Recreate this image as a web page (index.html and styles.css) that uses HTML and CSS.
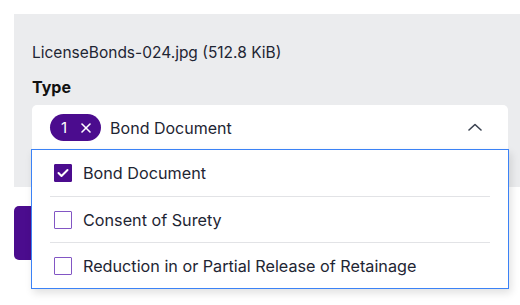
FILE: index.html
```html
<!DOCTYPE html>
<html lang="en">
  <head>
    <meta charset="UTF-8" />
    <meta name="viewport" content="width=device-width, initial-scale=1.0" />
    <title>Attachment Type</title>
    <link rel="stylesheet" href="styles.css">
  </head>
  <body>
    <div class="upload-panel">
      <div class="file-name">LicenseBonds-024.jpg (512.8 KiB)</div>
      <label class="field-label">Type</label>

      <div class="type-select">
        <div class="select-value">
          <span class="count-chip">
            <span>1</span>
            <svg width="10" height="10" viewBox="0 0 10 10" fill="none" stroke="currentColor" stroke-width="1.6" stroke-linecap="round">
              <line x1="1" y1="1" x2="9" y2="9"></line>
              <line x1="9" y1="1" x2="1" y2="9"></line>
            </svg>
          </span>
          <span class="select-text">Bond Document</span>
        </div>
        <svg class="chevron" width="14" height="8" viewBox="0 0 14 8" fill="none" stroke="currentColor" stroke-width="1.6" stroke-linecap="round" stroke-linejoin="round">
          <polyline points="1 7 7 1.5 13 7"></polyline>
        </svg>

        <ul class="type-options">
          <li class="option">
            <span class="checkbox checked">
              <svg width="12" height="10" viewBox="0 0 12 10" fill="none" stroke="white" stroke-width="2" stroke-linecap="round" stroke-linejoin="round">
                <polyline points="1.5 5 4.5 8 10.5 2"></polyline>
              </svg>
            </span>
            <span>Bond Document</span>
          </li>
          <li class="option">
            <span class="checkbox"></span>
            <span>Consent of Surety</span>
          </li>
          <li class="option">
            <span class="checkbox"></span>
            <span>Reduction in or Partial Release of Retainage</span>
          </li>
        </ul>
      </div>
    </div>

    <button class="save-button">Save</button>
  </body>
</html>
```

FILE: styles.css
```css
html,
body {
  min-height: 305px;
}

body {
  font-family: Inter, "Noto Sans", sans-serif;
  margin: 0;
  padding: 0;
  background-color: #ffffff;
  color: #1e2533;
}

.upload-panel {
  margin: 14px 0 0 14px;
  height: 173px;
  box-sizing: border-box;
  padding: 28px 12px 0 18px;
  background-color: #ebecee;
}

.file-name {
  font-size: 15.5px;
  line-height: 22px;
}

.field-label {
  display: block;
  margin-top: 12px;
  font-size: 16px;
  font-weight: 700;
  line-height: 22px;
  color: #111111;
}

.type-select {
  position: relative;
  z-index: 1;
  margin-top: 7px;
  height: 44px;
  display: flex;
  align-items: center;
  justify-content: space-between;
  padding: 0 26px 0 18px;
  background-color: white;
  border-radius: 5px 5px 0 0;
}

.select-value {
  display: flex;
  align-items: center;
  gap: 9px;
  margin-top: 1px;
}

.count-chip {
  display: flex;
  align-items: center;
  gap: 14px;
  height: 27px;
  padding: 0 10px 0 11px;
  border-radius: 14px;
  background-color: #4b0c8e;
  color: white;
  font-size: 15px;
}

.select-text {
  font-size: 16px;
}

.chevron {
  color: #3a4250;
}

.type-options {
  position: absolute;
  top: 44px;
  left: -1px;
  right: -1px;
  margin: 0;
  padding: 0 18px;
  list-style: none;
  background-color: white;
  border: 1px solid #3b82f6;
  box-shadow: 2px 4px 8px rgba(0, 0, 0, 0.12);
}

.option {
  display: flex;
  align-items: center;
  gap: 11px;
  height: 45px;
  padding-left: 4px;
  font-size: 16.2px;
  border-bottom: 1px solid #e2e3e6;
}

.option:first-child {
  height: 46px;
}

.option:last-child {
  border-bottom: none;
}

.checkbox {
  width: 18px;
  height: 18px;
  box-sizing: border-box;
  border: 1.5px solid #8256c4;
  border-radius: 1px;
  display: flex;
  align-items: center;
  justify-content: center;
}

.checkbox.checked {
  background-color: #4b0c8e;
  border-color: #4b0c8e;
}

.save-button {
  display: block;
  margin: 19px 0 0 14px;
  width: 140px;
  height: 54px;
  border: none;
  border-radius: 5px;
  background-color: #4b0c8e;
  color: white;
  font-family: Inter, sans-serif;
  font-size: 16px;
}
```
